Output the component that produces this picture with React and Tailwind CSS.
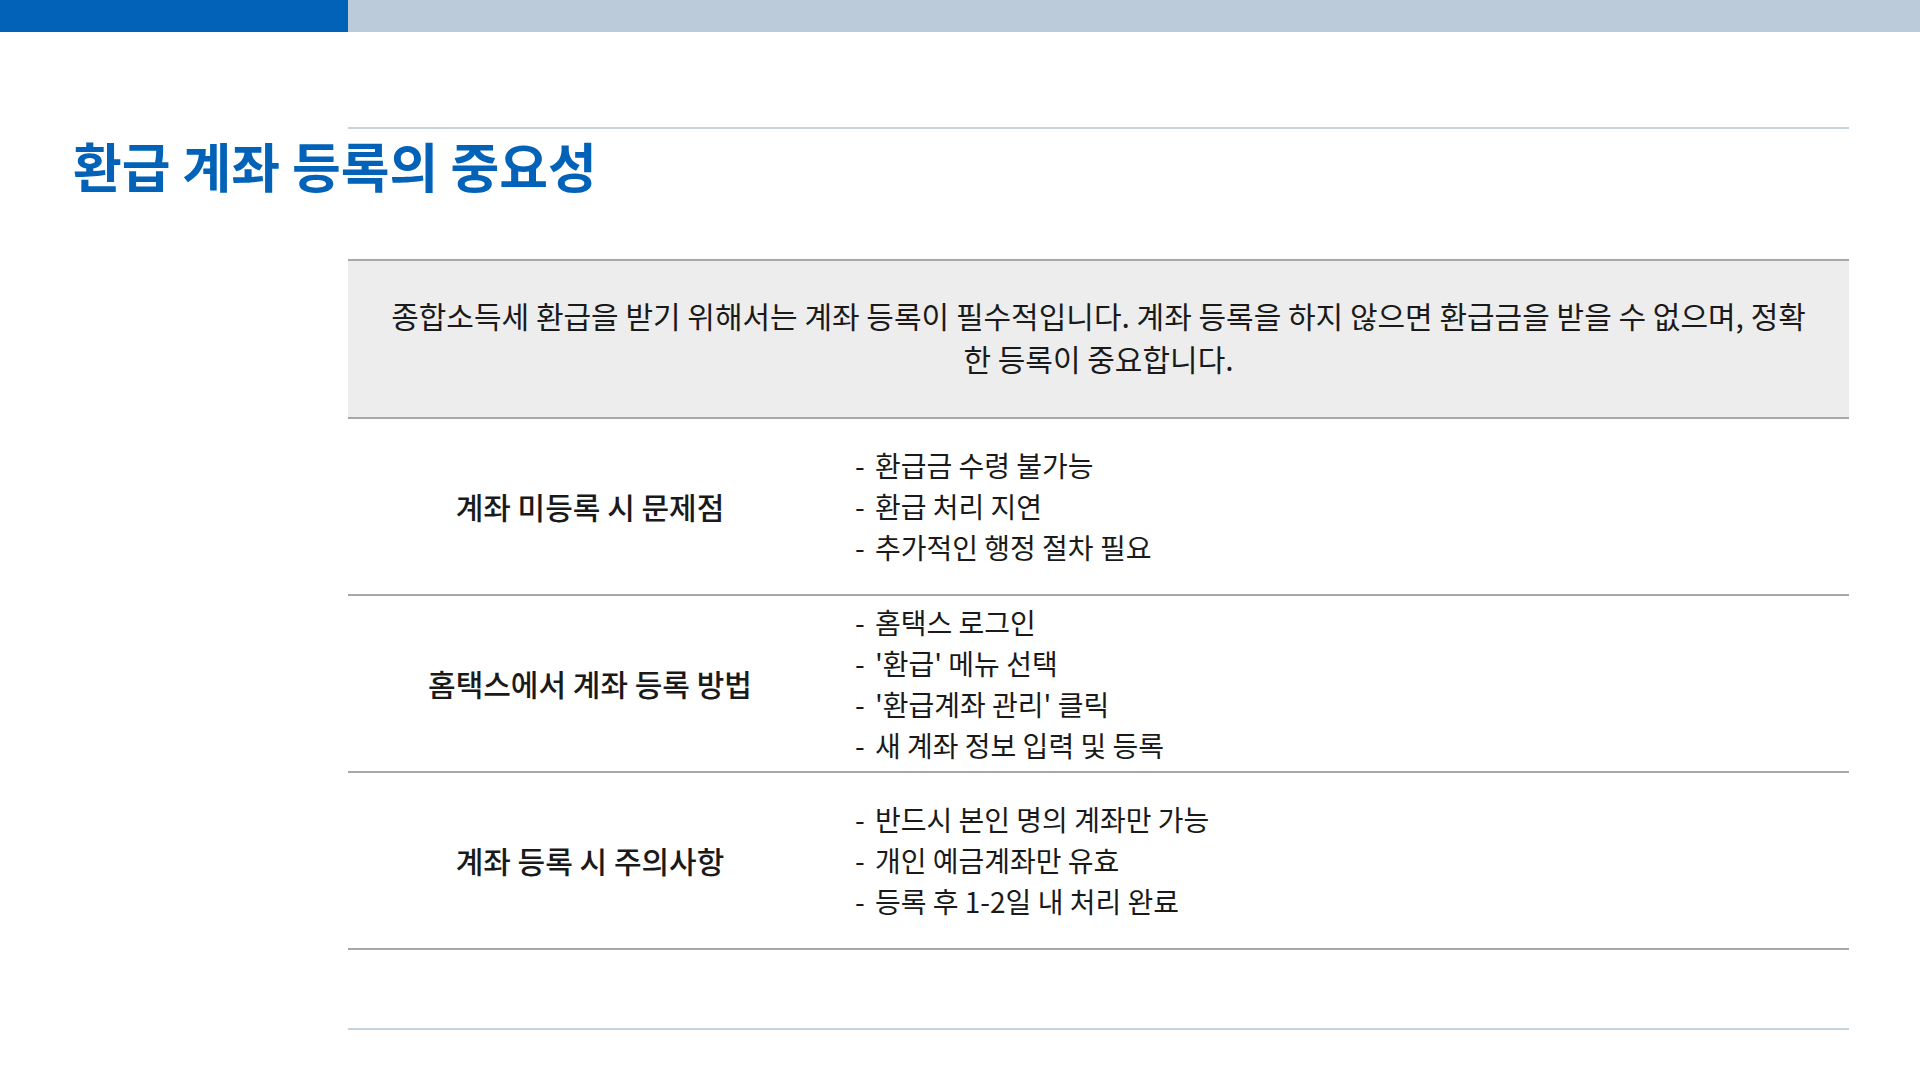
import React from 'react';

const rows = [
  {
    title: '계좌 미등록 시 문제점',
    items: ['환급금 수령 불가능', '환급 처리 지연', '추가적인 행정 절차 필요'],
  },
  {
    title: '홈택스에서 계좌 등록 방법',
    items: ['홈택스 로그인', "'환급' 메뉴 선택", "'환급계좌 관리' 클릭", '새 계좌 정보 입력 및 등록'],
  },
  {
    title: '계좌 등록 시 주의사항',
    items: ['반드시 본인 명의 계좌만 가능', '개인 예금계좌만 유효', '등록 후 1-2일 내 처리 완료'],
  },
];

const App = () => {
  return (
    <div className="w-[1920px] h-[1080px] bg-white overflow-hidden font-['Noto_Sans_CJK_KR',sans-serif] text-[#1a1a1a]">
      {/* top bar */}
      <div className="flex h-[32px]">
        <div className="w-[348px] bg-[#0262b8]" />
        <div className="flex-1 bg-[#bccbda]" />
      </div>

      {/* header */}
      <div className="ml-[348px] mr-[71px] mt-[95px] h-[2px] bg-[#c6d3df]" />
      <h1 className="pl-[73px] mt-[9px] text-[53px] leading-[54px] font-bold text-[#0262b8]">
        환급 계좌 등록의 중요성
      </h1>

      {/* content */}
      <div className="ml-[348px] mr-[71px] mt-[67px]">
        <div className="bg-[#ededed] border-t-2 border-b-2 border-[#a8a8a8] px-[40px] pt-[33px] pb-[37px] text-center text-[30px] leading-[43px]">
          종합소득세 환급을 받기 위해서는 계좌 등록이 필수적입니다. 계좌 등록을 하지 않으면 환급금을 받을 수 없으며, 정확한 등록이 중요합니다.
        </div>

        {rows.map((row) => (
          <div
            key={row.title}
            className="grid grid-cols-[484px_1fr] items-center h-[177px] border-b-2 border-[#a8a8a8]"
          >
            <div className="text-center text-[30px] font-medium">{row.title}</div>
            <div className="pl-[23px] text-[28px] leading-[41px]">
              {row.items.map((item) => (
                <div key={item}>
                  <span className="mr-[4px]">-</span> {item}
                </div>
              ))}
            </div>
          </div>
        ))}

        <div className="mt-[78px] h-[2px] bg-[#c6d3df]" />
      </div>
    </div>
  );
};

export default App;
